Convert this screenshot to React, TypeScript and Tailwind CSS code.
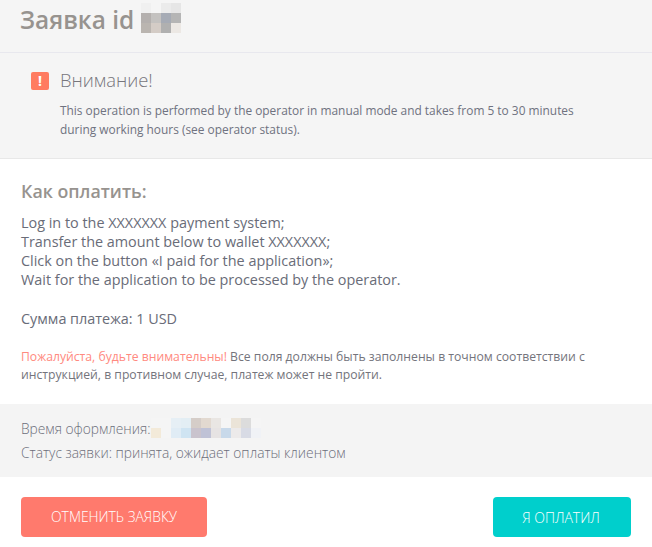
const titleCells = [
  ["#f0f0f0", "#f5f5f5", "#ebebeb", "#e6e6e6"],
  ["#b4b0ae", "#c4c2c0", "#a6abb5", "#b5b5b5"],
  ["#bab5b0", "#d4ccc6", "#b0b0b0", "#ece8e4"],
];
const timeCells = [
  ["#f5f5f5", "#f5f5f5", "#e6eff5", "#e3eef4", "#d5cdc8", "#e2d9d0", "#e9e6e3", "#f5f5f5", "#ebe4d8", "#dcdcdc", "#f5f5f5"],
  ["#f3ead9", "#f5f5f5", "#e0ecf5", "#cfe4f2", "#c9c3cd", "#bfc2d6", "#e6e3e3", "#c8d9ea", "#eceaea", "#d8dbe5", "#f0f2f6"],
];

function Pixels({ cells }: { cells: string[][] }) {
  const w = cells[0].length * 10;
  const h = cells.length * 10;
  return (
    <svg width={w} height={h} viewBox={`0 0 ${w} ${h}`} shapeRendering="crispEdges" className="block shrink-0">
      {cells.map((row, y) =>
        row.map((fill, x) => <rect key={`${x}-${y}`} x={x * 10} y={y * 10} width="10" height="10" fill={fill} />)
      )}
    </svg>
  );
}

export default function App() {
  return (
    <div className="h-[547px] w-[652px] overflow-hidden bg-white font-['Open_Sans',sans-serif] text-[#6f6f7a]">
      <div className="flex h-[53px] items-start border-b border-[#e8e8ee] bg-[#f5f5f5] pl-[20px]">
        <h1 className="mt-[3px] w-[121px] text-[24.4px] leading-[34px] font-semibold text-[#97938f]">Заявка id</h1>
        <div className="mt-[3px]">
          <Pixels cells={titleCells} />
        </div>
      </div>

      <div className="h-[106px] border-b border-[#e8e8e8] bg-[#f5f5f5] pt-[17px] pl-[31px]">
        <div className="flex items-center">
          <div className="mt-[2px] flex h-[18px] w-[18px] items-center justify-center rounded-[2px] bg-[#ff7b60] text-[14px] leading-none font-bold text-white">
            !
          </div>
          <div className="ml-[11px] text-[18.4px] leading-[20px] font-light text-[#77767c]">Внимание!</div>
        </div>
        <p className="mt-[11px] ml-[29px] w-[520px] text-[11.9px] leading-[19px] text-[#6f7280]">
          This operation is performed by the operator in manual mode and takes from 5 to 30 minutes during working hours (see operator status).
        </p>
      </div>

      <div className="h-[245px] px-[21px] pt-[20px]">
        <h2 className="text-[17.8px] leading-[24px] font-semibold text-[#97938f]">Как оплатить:</h2>
        <div className="mt-[10px] text-[14.4px] leading-[19px] text-[#696c78]">
          <div>Log in to the XXXXXXX payment system;</div>
          <div>Transfer the amount below to wallet XXXXXXX;</div>
          <div>Click on the button «I paid for the application»;</div>
          <div>Wait for the application to be processed by the operator.</div>
          <div className="mt-[20px]">Сумма платежа: 1 USD</div>
        </div>
        <p className="mt-[20px] w-[600px] text-[12.2px] leading-[18px] text-[#74747c]">
          <span className="text-[#ff8a80]">Пожалуйста, будьте внимательны!</span> Все поля должны быть заполнены в точном соответствии с инструкцией, в противном случае, платеж может не пройти.
        </p>
      </div>

      <div className="h-[73px] bg-[#f4f4f4] px-[21px] pt-[13px] text-[13.75px] leading-[24px] font-light text-[#6c6e7a]">
        <div className="flex h-[24px] items-start">
          <span className="w-[130px]">Время оформления:</span>
          <div className="mt-[1px]">
            <Pixels cells={timeCells} />
          </div>
        </div>
        <div>Статус заявки: принята, ожидает оплаты клиентом</div>
      </div>

      <div className="flex justify-between pt-[20px] pr-[21px] pl-[21px]">
        <button className="h-[40px] w-[186px] rounded-[4px] bg-[#ff7a6d] text-[13.9px] font-light text-white">ОТМЕНИТЬ ЗАЯВКУ</button>
        <button className="h-[40px] w-[138px] rounded-[4px] bg-[#00cfcc] pr-[2px] text-[14px] font-light text-white">Я ОПЛАТИЛ</button>
      </div>
    </div>
  );
}
